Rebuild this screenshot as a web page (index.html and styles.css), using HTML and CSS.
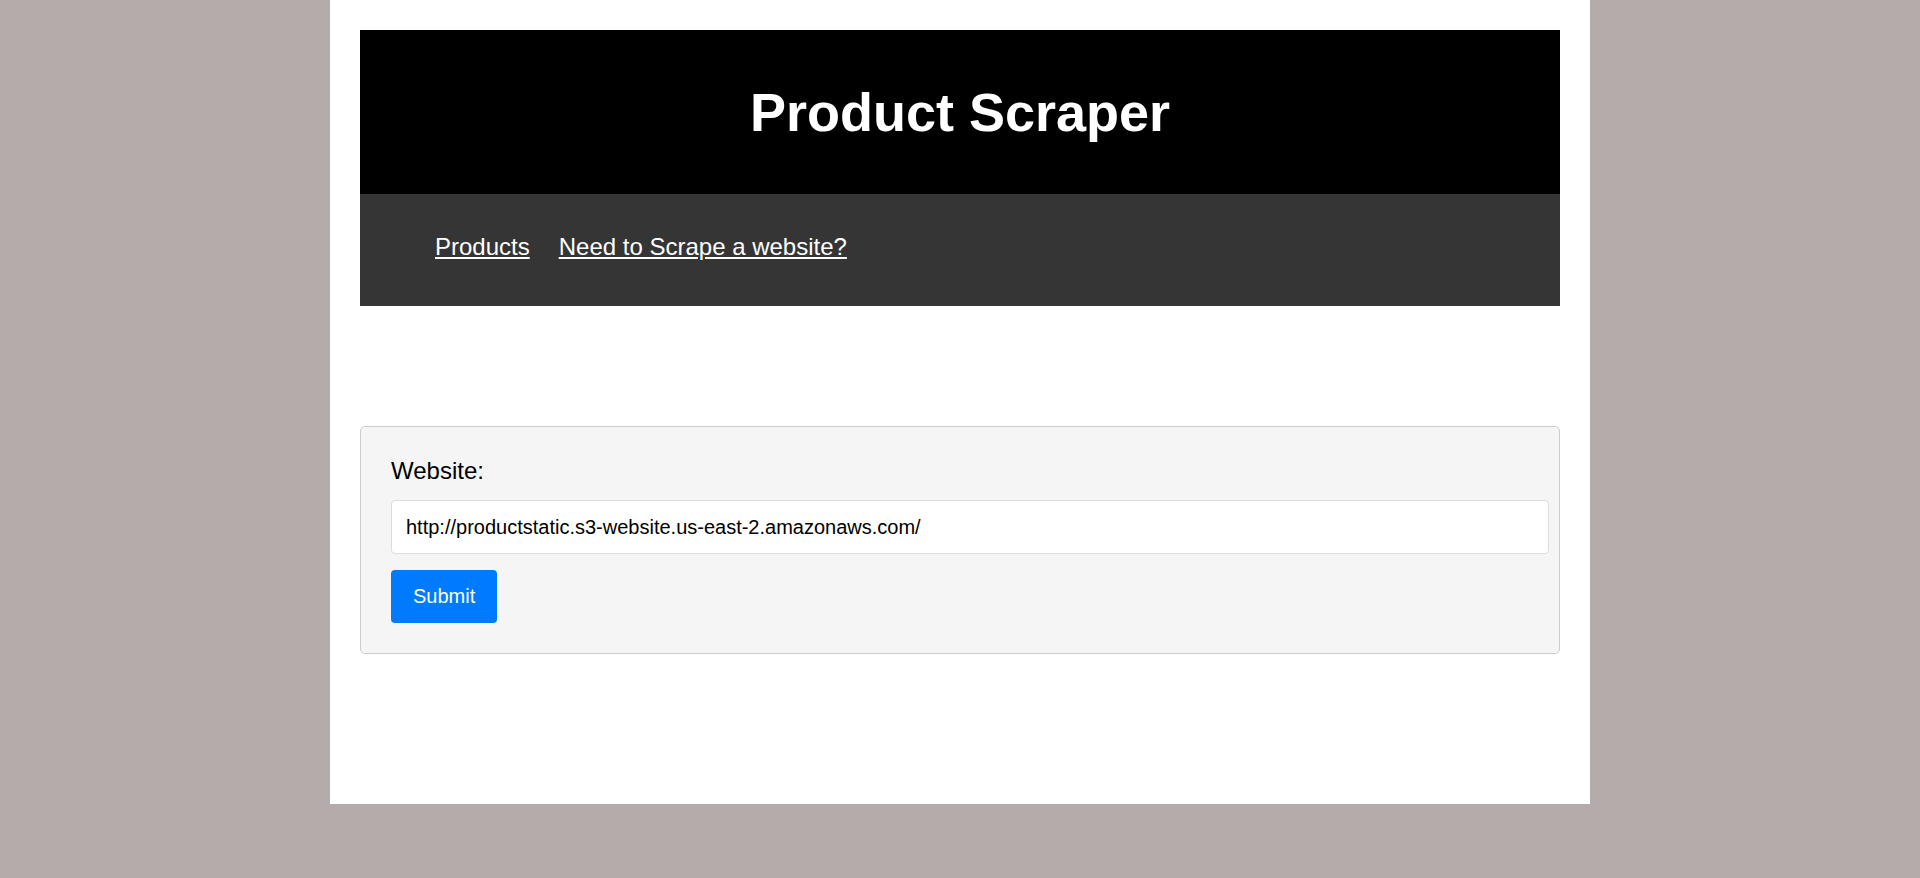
FILE: index.html
```html
<!DOCTYPE html>
<html lang="en">
<head>
<meta charset="utf-8">
<title>Product Scraper</title>
<link rel="stylesheet" href="styles.css">
</head>
<body>
<div class="page">
  <header class="masthead">
    <h1 class="title">Product Scraper</h1>
  </header>
  <nav class="nav">
    <a class="nav-link" href="#">Products</a>
    <a class="nav-link" href="#">Need to Scrape a website?</a>
  </nav>
  <form class="card" onsubmit="return false;">
    <label class="label" for="site">Website:</label>
    <input class="input" id="site" type="text" value="http://productstatic.s3-website.us-east-2.amazonaws.com/">
    <button class="button" type="submit">Submit</button>
  </form>
</div>
</body>
</html>
```

FILE: styles.css
```css
html, body {
  margin: 0;
  padding: 0;
}
body {
  background: #b3acaa;
  font-family: "Liberation Sans", Arial, sans-serif;
  font-size: 20px;
  color: #000;
}
.page {
  width: 1200px;
  margin: 0 auto;
  padding: 30px 30px 30px;
  background: #fff;
}
.masthead {
  background: #000;
  padding: 51px 0;
}
.title {
  margin: 0;
  text-align: center;
  color: #fff;
  font-size: 54px;
  font-weight: bold;
  line-height: 62px;
}
.nav {
  background: #353535;
  display: flex;
  gap: 29px;
  padding: 39px 0 45px 75px;
}
.nav-link {
  color: #fff;
  font-size: 24px;
  line-height: 28px;
  text-decoration: underline;
}
.card {
  margin: 120px 0 120px;
  background: #f5f5f5;
  border: 1px solid #cccccc;
  border-radius: 5px;
  padding: 30px;
  display: flex;
  flex-direction: column;
  align-items: flex-start;
}
.label {
  font-size: 24px;
  line-height: 28px;
  margin-bottom: 15px;
}
.input {
  box-sizing: border-box;
  width: calc(100% + 20px);
  height: 54px;
  padding: 0 14px;
  border: 1px solid #dddddd;
  border-radius: 4px;
  background: #fff;
  font-family: "Liberation Sans", Arial, sans-serif;
  font-size: 20px;
  color: #000;
  margin: 0 0 16px;
}
.button {
  background: #007bff;
  color: #fff;
  border: none;
  border-radius: 4px;
  padding: 0 22px;
  height: 53px;
  font-family: "Liberation Sans", Arial, sans-serif;
  font-size: 20px;
}
```
